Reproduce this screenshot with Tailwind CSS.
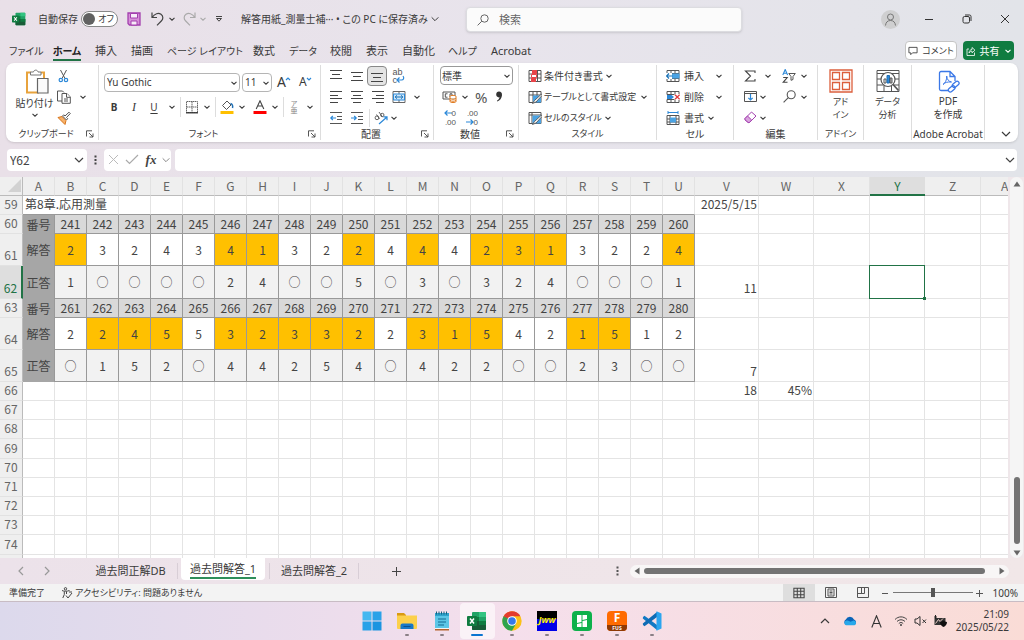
<!DOCTYPE html>
<html lang="ja">
<head>
    <meta charset="UTF-8" />
    <meta name="viewport" content="width=device-width, initial-scale=1" />
    <title>解答用紙_測量士補 - Excel</title>
    <script src="https://cdn.jsdelivr.net/npm/@tailwindcss/browser@4"></script>
</head>
<body class="h-screen flex flex-col overflow-hidden bg-linear-to-r from-[#e9e0e8] via-[#e8e4ec] to-[#e2e4e9] text-[#3a3a3a] text-[10px] leading-3 whitespace-nowrap [font-family:'Noto_Sans','Noto_Sans_CJK_JP',sans-serif] [font-feature-settings:'palt']">
    <svg class="hidden">
        <symbol id="chev" viewBox="0 0 8 8"><path d="M1.500 2.800 4 5.200 6.500 2.800" fill="none" stroke="currentColor" stroke-width="1.100" /></symbol>
        <symbol id="chev-lg" viewBox="0 0 12 12"><path d="M2 4 6 8 10 4" fill="none" stroke="currentColor" stroke-width="1.200" /></symbol>
        <symbol id="launch" viewBox="0 0 8 8"><path d="M.5 6.500V.8H6M3 3l4 4M7 3.500V7H3.500" fill="none" stroke="#444" stroke-width=".9" /></symbol>
        <symbol id="excel" viewBox="0 0 20 20"><path d="M6 1h12a1 1 0 0 1 1 1v16a1 1 0 0 1-1 1H6a1 1 0 0 1-1-1V2a1 1 0 0 1 1-1z" fill="#21a366" /><path d="M12 1h6a1 1 0 0 1 1 1v4h-7z" fill="#33c481" /><path d="M5 6h7v4H5z" fill="#107c41" /><path d="M5 10h14v8a1 1 0 0 1-1 1H6a1 1 0 0 1-1-1z" fill="#185c37" /><path d="M12 10h7v4h-7z" fill="#107c41" /><rect y="5" width="10" height="10" rx="1" fill="#107c41" /><path d="m3 7.500 4 5M7 7.500l-4 5" stroke="#fff" stroke-width="1.500" /></symbol>
        <symbol id="grid" viewBox="0 0 14 14"><path d="M1 1.500h12v11H1zM1 5h12M1 9h12M5 1.500v11M9 1.500v11" fill="none" stroke="#444" stroke-width="1.200" /></symbol>
    </svg>

    <!-- title bar -->
    <header class="h-[38px] shrink-0 flex items-center pl-3">
        <svg class="size-[14px]"><use href="#excel" /></svg>
        <label for="autosave" class="ml-3 w-[43px]">自動保存</label>
        <span class="relative flex">
            <input id="autosave" type="checkbox" class="appearance-none w-[37px] h-4 rounded-full border border-[#888] bg-white" />
            <span class="absolute left-0.5 top-0.5 size-3 rounded-full bg-[#616161] pointer-events-none"></span>
            <span class="absolute right-1 top-0.5 text-[9px] pointer-events-none">オフ</span>
        </span>
        <button aria-label="上書き保存" class="ml-2"><svg class="size-4" viewBox="0 0 16 16"><path d="M2 2h12v12H3.500L2 12.500z" fill="#d68fd8" stroke="#a33fae" stroke-width="1.300" /><path d="M4.500 2.500h7v4.500h-7zM5 10h6v4H5z" fill="#f7ecf8" stroke="#a33fae" /></svg></button>
        <button aria-label="元に戻す" class="ml-2"><svg class="size-4" viewBox="0 0 16 16" fill="none" stroke="#444" stroke-width="1.200"><path d="M2 1.500v5h5M2.300 6.300C4.500 2.500 8.500 1.500 11 3.300c2.500 2 2.300 4.700.3 6.700L7 14.300" /></svg></button>
        <button aria-label="元に戻す一覧" class="ml-0.5"><svg class="size-2"><use href="#chev" /></svg></button>
        <button aria-label="やり直し" class="ml-[5px]"><svg class="size-4" viewBox="0 0 16 16" fill="none" stroke="#aaa" stroke-width="1.200"><path d="M14 1.500v5H9M13.700 6.300C11.500 2.500 7.500 1.500 5 3.300c-2.500 2-2.300 4.700-.3 6.700L9 14.300" /></svg></button>
        <button aria-label="やり直し一覧" class="ml-0.5 text-[#aaa]"><svg class="size-2"><use href="#chev" /></svg></button>
        <button aria-label="クイック アクセス" class="ml-2"><svg class="size-2" viewBox="0 0 8 8" fill="none" stroke="#444"><path d="M1 1.500h6M1.500 3.500h5L4 6.200z" /></svg></button>
        <h1 class="ml-[18px]">解答用紙_測量士補··· • この PC に保存済み</h1>
        <svg class="size-2.5 ml-0.5"><use href="#chev-lg" /></svg>
        <label class="absolute left-[466px] top-[7px] w-[27%] h-[25px] flex items-center gap-2.5 pl-2.5 rounded-sm border border-[#dcdce0] bg-[#fbfbfb] shadow-sm text-[#666]">
            <svg class="size-3 shrink-0" viewBox="0 0 12 12" fill="none" stroke="#666"><circle cx="7.500" cy="4.500" r="3.700" /><path d="M4.800 7.200.6 11.400" /></svg>
            <input type="search" aria-label="検索" placeholder="検索" class="w-full text-[11px] outline-none placeholder:text-[#666]" />
        </label>
        <div class="ml-auto flex items-center">
            <button aria-label="アカウント" class="size-[19px] rounded-full bg-[#cfcfd0] flex items-center justify-center"><svg class="size-[13px]" viewBox="0 0 13 13" fill="none" stroke="#777"><circle cx="6.500" cy="4" r="3" /><path d="M1.500 12.500c.3-3.200 2-5 5-5s4.700 1.800 5 5" /></svg></button>
            <button aria-label="最小化" class="ml-2.5 w-[38px] flex justify-center"><svg class="size-[10px]" viewBox="0 0 10 10"><path d="M1 5.500h8" stroke="#333" /></svg></button>
            <button aria-label="元のサイズ" class="w-[38px] flex justify-center"><svg class="size-[10px]" viewBox="0 0 10 10" fill="none" stroke="#333"><rect x="1" y="2.500" width="6.500" height="6.500" rx="1.500" /><path d="M3 1h4.500A1.500 1.500 0 0 1 9 2.500V7" /></svg></button>
            <button aria-label="閉じる" class="w-[38px] flex justify-center"><svg class="size-[10px]" viewBox="0 0 10 10"><path d="m1 1 8 8M9 1 1 9" stroke="#333" /></svg></button>
        </div>
    </header>

    <!-- ribbon tabs -->
    <nav class="h-[25px] shrink-0 flex items-center pl-[9px] pr-2.5 text-[11px]">
        <a href="#" class="w-11 text-[10px]">ファイル</a>
        <a href="#" class="w-[28px] mr-[14px] font-bold text-[10px] text-[#222] border-b-2 border-[#217346] pt-1 pb-0.5 flex justify-center">ホーム</a>
        <a href="#" class="w-9">挿入</a>
        <a href="#" class="w-9">描画</a>
        <a href="#" class="w-[86px] text-[10px]">ページ レイアウト</a>
        <a href="#" class="w-9">数式</a>
        <a href="#" class="w-[41px] text-[10px]">データ</a>
        <a href="#" class="w-9">校閲</a>
        <a href="#" class="w-9">表示</a>
        <a href="#" class="w-[46px]">自動化</a>
        <a href="#" class="w-[43px] text-[10px]">ヘルプ</a>
        <a href="#">Acrobat</a>
        <button class="ml-auto h-[19px] w-[52px] flex items-center justify-center gap-1 rounded-sm border border-[#c4c4c4] bg-white text-[9px]"><svg class="size-[10px] shrink-0" viewBox="0 0 11 11" fill="none" stroke="#444"><path d="M1 1.500h9v6H5L3 9.500v-2H1z" /></svg>コメント</button>
        <button class="ml-1.5 h-[19px] w-[51px] flex items-center justify-center gap-1 rounded-sm bg-[#107c41] text-white text-[10px]"><svg class="size-[10px]" viewBox="0 0 10 10" fill="none" stroke="#fff" stroke-width=".8"><path d="M3 3H1v6.500h7.500V6.500M3 7C3.300 4.700 4.500 3.500 6 3.500V1.500l3 2.700-3 2.600V5.200C4.800 5.200 3.800 5.700 3 7z" /></svg>共有<svg class="size-2"><use href="#chev" /></svg></button>
    </nav>

    <!-- ribbon -->
    <section class="mx-1.5 h-[79px] shrink-0 flex py-0.5 rounded-lg bg-white shadow">
        <div class="w-[93px] flex flex-col border-r border-[#ddd]">
            <div class="h-[63px] flex">
                <button class="w-[51px] pt-1 pl-1.5 flex flex-col items-center">
                    <svg class="w-6 h-[26px] ml-1" viewBox="0 0 24 26" fill="none"><path d="M6 3.500H2v20h12M16 3.500h3V9" stroke="#e8a33d" stroke-width="2" /><path d="M5.500 6V3h3c.3-2.500 4.200-2.500 4.500 0h3v3z" fill="#fff" stroke="#777" /><path d="M12.500 9.500h10.500v14.500H12.500z" fill="#fafafa" stroke="#666" stroke-width="1.200" /></svg>
                    <span class="mt-0.5">貼り付け</span>
                    <svg class="size-2 mt-0.5"><use href="#chev" /></svg>
                </button>
                <div class="flex flex-col">
                    <button aria-label="切り取り" class="h-[21px]"><svg class="size-[14px]" viewBox="0 0 14 14" fill="none"><path d="m3.500 1 4.500 8.500M9.500 1 5 9.500" stroke="#555" /><circle cx="3.800" cy="11" r="1.700" stroke="#2b88d8" stroke-width="1.200" /><circle cx="9" cy="11" r="1.700" stroke="#2b88d8" stroke-width="1.200" /></svg></button>
                    <button aria-label="コピー" class="h-[21px] flex items-center gap-2"><svg class="size-[14px]" viewBox="0 0 14 14" fill="#fff" stroke="#555"><path d="M5 11H.5V1h5l1.500 1.500" /><path d="M5 3.500h5L13.300 7v6.300H5z" /><path d="M9.500 3.500v3.800h3.800M7 9h4M7 11h4" /></svg><svg class="size-2"><use href="#chev" /></svg></button>
                    <button aria-label="書式のコピー" class="h-[21px]"><svg class="size-[14px]" viewBox="0 0 14 14"><path d="m1 6.500 7 7 1-4-4-4z" fill="#f6b26b" stroke="#d8741a" /><path d="m5.500 5 4 4 1.200-1.300L9.500 6.500l3.800-4-1.300-1.300-4 3.800-1.300-1.200z" fill="#fff" stroke="#555" /></svg></button>
                </div>
            </div>
            <div class="h-3 flex items-center"><span class="flex-1 text-center text-[9px]">クリップボード</span><button aria-label="クリップボードの設定" class="w-3"><svg class="size-2"><use href="#launch" /></svg></button></div>
        </div>

        <div class="w-[222px] flex flex-col border-r border-[#ddd]">
            <div class="h-[63px] pl-[5px] pt-1.5">
                <div class="flex items-center h-[22px]">
                    <span class="relative"><select aria-label="フォント" class="appearance-none block w-[136px] h-[19px] rounded-sm border border-[#b5b5b5] px-0.5 bg-white"><option>Yu Gothic</option></select><svg class="absolute right-0.5 top-1.5 size-2 pointer-events-none"><use href="#chev" /></svg></span>
                    <span class="relative ml-0.5"><select aria-label="フォント サイズ" class="appearance-none block w-[30px] h-[19px] rounded-sm border border-[#b5b5b5] px-0.5 bg-white"><option>11</option></select><svg class="absolute right-0.5 top-1.5 size-2 pointer-events-none"><use href="#chev" /></svg></span>
                    <button aria-label="フォント サイズの拡大" class="ml-[5px] flex text-[14px]">A<svg class="size-1.5 -ml-px" viewBox="0 0 6 6"><path d="m1 4 2-2 2 2" fill="none" stroke="#2b88d8" stroke-width="1.200" /></svg></button>
                    <button aria-label="フォント サイズの縮小" class="ml-2 flex text-[12px]">A<svg class="size-1.5 -ml-px" viewBox="0 0 6 6"><path d="m1 2 2 2 2-2" fill="none" stroke="#2b88d8" stroke-width="1.200" /></svg></button>
                </div>
                <div class="flex items-center h-7">
                    <button aria-label="太字" class="w-5 font-bold">B</button>
                    <button aria-label="斜体" class="w-5 italic [font-family:'Liberation_Serif',serif] text-[12px]">I</button>
                    <button aria-label="下線" class="w-5 underline underline-offset-2">U</button>
                    <svg class="size-2 ml-1"><use href="#chev" /></svg>
                    <span class="mx-1 h-5 border-l border-[#ddd]"></span>
                    <button aria-label="罫線"><svg class="size-[14px]" viewBox="0 0 14 14" fill="none" stroke="#666"><path d="M1.500 1.500h11v11h-11zM7 1.500v11M1.500 7h11" stroke-dasharray="1.500 .5" /><path d="M1 12.800h12" stroke="#333" stroke-width="1.300" /></svg></button>
                    <svg class="size-2 ml-1"><use href="#chev" /></svg>
                    <span class="mx-1 h-5 border-l border-[#ddd]"></span>
                    <button aria-label="塗りつぶしの色"><svg class="size-[14px]" viewBox="0 0 14 14"><path d="M2.500 5.500 7 1l4 4-4.500 4.500z" fill="#fff" stroke="#555" /><path d="M10.500 3.500c2 .5 2.500 2.500 2 4.500" stroke="#1f6fb5" stroke-width="1.500" fill="none" /><path d="M.5 11h13v3H.5z" fill="#ffc000" /></svg></button>
                    <svg class="size-2 ml-1"><use href="#chev" /></svg>
                    <button aria-label="フォントの色" class="ml-[7px]"><svg class="size-[14px]" viewBox="0 0 14 14"><path d="M3.200 9 7 .8 10.800 9M4.600 6h4.800" fill="none" stroke="#444" stroke-width="1.100" /><path d="M.5 11h13v3H.5z" fill="#f00" /></svg></button>
                    <svg class="size-2 ml-1"><use href="#chev" /></svg>
                    <span class="mx-1 h-5 border-l border-[#ddd]"></span>
                    <button aria-label="ふりがなの表示" class="w-3 text-[7px] leading-[7px] text-[#888]">ア<br />亜</button>
                    <svg class="size-2 ml-1.5"><use href="#chev" /></svg>
                </div>
            </div>
            <div class="h-3 flex items-center"><span class="flex-1 text-center text-[9px]">フォント</span><button aria-label="フォントの設定" class="w-3"><svg class="size-2"><use href="#launch" /></svg></button></div>
        </div>

        <div class="w-[113px] flex flex-col border-r border-[#ddd]">
            <div class="pl-1 flex flex-col">
                <div class="h-[21px] flex items-center">
                    <button aria-label="上揃え" class="w-[21px] flex justify-center"><svg class="size-3" viewBox="0 0 12 12" stroke="#444"><path d="M0 .5h12M2 4.500h8M0 8.500h12" /></svg></button>
                    <button aria-label="上下中央揃え" class="w-[21px] flex justify-center"><svg class="size-3" viewBox="0 0 12 12" stroke="#444"><path d="M0 2.500h12M2 6.500h8M0 10.500h12" /></svg></button>
                    <button aria-label="下揃え" class="w-[20px] h-5 flex justify-center items-center rounded-sm border border-[#888] bg-[#e4e4e4]"><svg class="size-3" viewBox="0 0 12 12" stroke="#444"><path d="M0 3.500h12M2 7.500h8M0 11.500h12" /></svg></button>
                    <button aria-label="折り返して全体を表示する" class="w-[23px] flex justify-center"><span class="relative w-3 h-4 text-left text-[9px] leading-2 text-[#555] [font-family:'Liberation_Sans',sans-serif]">ab<br />c<svg class="absolute right-0 bottom-0 size-[9px]" viewBox="0 0 9 9" fill="none" stroke="#2b88d8" stroke-width="1.200"><path d="M7 1c1.500 2 .5 4-1.500 4H1M3.500 2.500 1 5l2.500 2.500" /></svg></span></button>
                </div>
                <div class="h-[21px] flex items-center">
                    <button aria-label="左揃え" class="w-[21px] flex justify-center"><svg class="size-3" viewBox="0 0 12 12" stroke="#444"><path d="M0 .5h12M0 4.500h8M0 7.500h12M0 11.500h8" /></svg></button>
                    <button aria-label="中央揃え" class="w-[21px] flex justify-center"><svg class="size-3" viewBox="0 0 12 12" stroke="#444"><path d="M0 .5h12M2 4.500h8M0 7.500h12M2 11.500h8" /></svg></button>
                    <button aria-label="右揃え" class="w-[21px] flex justify-center"><svg class="size-3" viewBox="0 0 12 12" stroke="#444"><path d="M0 .5h12M4 4.500h8M0 7.500h12M4 11.500h8" /></svg></button>
                    <button aria-label="セルを結合して中央揃え" class="w-[21px] flex justify-center"><svg class="size-[14px]" viewBox="0 0 14 14" fill="none"><path d="M1 1.500h12v11H1zM7 1.500v2.500M7 10v2.500" stroke="#666" /><path d="M1.500 4h11v6h-11z" fill="#cfe6f8" stroke="#2b88d8" /><path d="M3 7h8M5 5.300 3.200 7 5 8.700M9 5.300 10.800 7 9 8.700" stroke="#1872b8" /></svg></button>
                    <svg class="size-2 ml-1"><use href="#chev" /></svg>
                </div>
                <div class="h-[21px] flex items-center">
                    <button aria-label="インデントを減らす" class="w-[21px] flex justify-center"><svg class="size-3" viewBox="0 0 12 12" fill="none"><path d="M0 .5h12M7 4.500h5M7 7.500h5M0 11.500h12" stroke="#555" /><path d="M6 6H.8M2.800 4l-2 2 2 2" stroke="#2b88d8" stroke-width="1.200" /></svg></button>
                    <button aria-label="インデントを増やす" class="w-[21px] flex justify-center"><svg class="size-3" viewBox="0 0 12 12" fill="none"><path d="M0 .5h12M7 4.500h5M7 7.500h5M0 11.500h12" stroke="#555" /><path d="M0 6h5.200M3.200 4l2 2-2 2" stroke="#2b88d8" stroke-width="1.200" /></svg></button>
                    <span class="ml-0.5 mr-1 h-[18px] border-l border-[#ddd]"></span>
                    <button aria-label="方向"><svg class="size-[14px]" viewBox="0 0 14 14" fill="none"><circle cx="3" cy="6.800" r="1.900" stroke="#555" stroke-width=".9" /><path d="M2.500 3.500 5.500 8M5 1l3.500 5" stroke="#555" stroke-width=".9" /><circle cx="8.300" cy="4" r="1.700" stroke="#555" stroke-width=".9" /><path d="M5 13 13 6M9.500 5.800H13v3.500" stroke="#2b88d8" stroke-width="1.200" /></svg></button>
                    <svg class="size-2 ml-0.5"><use href="#chev" /></svg>
                </div>
            </div>
            <div class="h-3 flex items-center"><span class="flex-1 text-center">配置</span><button aria-label="配置の設定" class="w-3"><svg class="size-2"><use href="#launch" /></svg></button></div>
        </div>

        <div class="w-[85px] flex flex-col border-r border-[#ddd]">
            <div class="pl-1.5 flex flex-col">
                <div class="h-[21px] flex items-center"><span class="relative"><select aria-label="表示形式" class="appearance-none block w-[73px] h-[19px] rounded-sm border border-[#999] px-px bg-white"><option>標準</option></select><svg class="absolute right-0.5 top-1.5 size-2 pointer-events-none"><use href="#chev" /></svg></span></div>
                <div class="h-[21px] flex items-center">
                    <button aria-label="通貨表示形式" class="ml-0.5"><svg class="w-[15px] h-3" viewBox="0 0 15 12" fill="none"><path d="M1 1h12v7H1z" stroke="#555" /><path d="M5.500 2.800H3.300v3.400h2.200M8 6.200V2.800h2v3.400" stroke="#555" /><path d="M8 5.500c0-1.500 6-1.500 6 0v5c0 1.400-6 1.400-6 0zM8 7.500c1.500 1 4.500 1 6 0M8 9.500c1.500 1 4.500 1 6 0" fill="#fff" stroke="#e07a1f" /></svg></button>
                    <svg class="size-2 ml-1"><use href="#chev" /></svg>
                    <button aria-label="パーセント スタイル" class="ml-1.5 text-[15px] text-[#555]">%</button>
                    <button aria-label="桁区切りスタイル" class="ml-2"><svg class="w-2 h-[11px]" viewBox="0 0 8 11"><path d="M4 .5c2 0 3.200 1.300 3 3.700C6.700 7.200 5 9.500 2.300 10.500l-.4-.7C3.400 9 4.300 7.800 4.500 6.300 2.800 6.700 1.200 5.600 1.200 3.600 1.200 1.800 2.300.5 4 .5z" fill="#333" /></svg></button>
                </div>
                <div class="h-[21px] flex items-center gap-2 text-[8px] leading-[9px] text-[#555] [font-family:'Liberation_Sans',sans-serif]">
                    <button aria-label="小数点以下の表示桁数を増やす" class="ml-0.5 w-[14px] text-right"><span class="flex items-center justify-end"><svg class="size-2" viewBox="0 0 8 8" fill="none" stroke="#2b88d8" stroke-width="1.200"><path d="M8 4H1M3.500 1.500 1 4l2.500 2.500" /></svg>0</span>.00</button>
                    <button aria-label="小数点以下の表示桁数を減らす" class="w-[14px] text-right">.00<span class="flex items-center justify-end"><svg class="size-2" viewBox="0 0 8 8" fill="none" stroke="#2b88d8" stroke-width="1.200"><path d="M0 4h7M4.500 1.500 7 4 4.500 6.500" /></svg>0</span></button>
                </div>
            </div>
            <div class="h-3 flex items-center"><span class="flex-1 text-center">数値</span><button aria-label="数値の設定" class="w-3"><svg class="size-2"><use href="#launch" /></svg></button></div>
        </div>

        <div class="w-[138px] flex flex-col border-r border-[#ddd]">
            <button class="h-[21px] pl-[9px] flex items-center gap-0.5"><svg class="size-[14px]" viewBox="0 0 14 14" fill="none"><path d="M1 1.500h12v11H1zM1 5h12M1 9h12M9.500 1.500v11" stroke="#555" /><path d="M4 1h5v4H4zM3 9h5v4H3z" fill="#e8454a" /><path d="M3.500 5.500h5v3h-5z" fill="#fff" stroke="#e8454a" /></svg>条件付き書式<svg class="size-2"><use href="#chev" /></svg></button>
            <button class="h-[21px] pl-[9px] flex items-center gap-0.5 text-[9px]"><svg class="size-[14px]" viewBox="0 0 14 14" fill="none"><path d="M1 1.500h12v11H1zM1 5h12M5 1.500v11M9 1.500v11" stroke="#555" /><path d="M5 5.500h8v7H5z" fill="#4ba3e3" /><path d="m13.500 4-7 6.500-2 3 3.500-1.500 6-6.500z" fill="#fff" stroke="#555" stroke-width=".9" /></svg>テーブルとして書式設定<svg class="size-2 ml-0.5"><use href="#chev" /></svg></button>
            <button class="h-[21px] pl-[9px] flex items-center gap-0.5 text-[9px]"><svg class="size-[14px]" viewBox="0 0 14 14" fill="none"><path d="M1 1.500h12v11H1zM1 4h12M4 1.500v11" stroke="#555" /><path d="M4.500 4.500H13v8H4.500z" fill="#4ba3e3" /><path d="m13.500 4-7 6.500-2 3 3.500-1.500 6-6.500z" fill="#fff" stroke="#555" stroke-width=".9" /></svg>セルのスタイル<svg class="size-2"><use href="#chev" /></svg></button>
            <div class="h-3 text-center text-[9px]">スタイル</div>
        </div>

        <div class="w-[77px] flex flex-col border-r border-[#ddd]">
            <button class="h-[21px] pl-[9px] pr-2.5 flex items-center gap-1"><svg class="size-[14px]" viewBox="0 0 14 14" fill="none"><path d="M1 1.500h12v11H1zM1 4.500h12M1 9.500h12M5 1.500v3M9 1.500v3M5 9.500v3M9 9.500v3" stroke="#555" /><path d="M6 4.500h7.500v5H6z" fill="#4ba3e3" /><path d="M0 4h6v6H0z" fill="#fff" /><path d="M6.500 7H.5M3 4.500.5 7 3 9.500" stroke="#1872b8" stroke-width="1.200" /></svg>挿入<svg class="size-2 ml-auto"><use href="#chev" /></svg></button>
            <button class="h-[21px] pl-[9px] pr-2.5 flex items-center gap-1"><svg class="size-[14px]" viewBox="0 0 14 14" fill="none"><path d="M1 4.500v-3h12v3M1 9.500v3h12v-3M5 1.500v3M9 1.500v3M5 9.500v3M9 9.500v3M1 4.500h12M1 9.500h12" stroke="#555" /><path d="M1 5h4.500L8 7 5.500 9H1z" fill="#2b88d8" /><path d="M8.500 4H14v6H8.500z" fill="#fff" /><path d="m9 4.700 4.600 4.600M13.600 4.700 9 9.300" stroke="#e03a3e" stroke-width="1.300" /></svg>削除<svg class="size-2 ml-auto"><use href="#chev" /></svg></button>
            <button class="h-[21px] pl-[9px] flex items-center gap-1"><svg class="size-[14px]" viewBox="0 0 14 14" fill="none"><path d="M1 4.500h12v9H1zM1 8h12M1 11h12M4 4.500v9M10 4.500v9" stroke="#555" /><path d="M4 6.500h6v5H4z" fill="#4ba3e3" /><path d="M2 1.500h10M2 0v3M12 0v3" stroke="#2b88d8" /></svg>書式<svg class="size-2 -ml-px"><use href="#chev" /></svg></button>
            <div class="h-3 text-center">セル</div>
        </div>

        <div class="w-[84px] flex flex-col border-r border-[#ddd]">
            <div class="h-[21px] pl-2.5 flex items-center">
                <button aria-label="合計"><svg class="size-3" viewBox="0 0 12 12" fill="none" stroke="#444" stroke-width="1.100"><path d="M11 3V1H1.500L6.500 6l-5 5H11V9" /></svg></button><svg class="size-2 ml-2"><use href="#chev" /></svg>
                <button aria-label="並べ替えとフィルター" class="ml-2.5"><svg class="size-[14px]" viewBox="0 0 14 14" fill="none"><path d="M.8 6 3.200.5 5.600 6M1.500 4.200h3.400" stroke="#2b88d8" stroke-width="1.100" /><path d="M1.200 8.500h4l-4 4.800h4.300" stroke="#444" stroke-width="1.100" /><path d="M6.800 4.500h6.500L11 7.500v3l-2 .8V7.500z" stroke="#555" /></svg></button><svg class="size-2 ml-1"><use href="#chev" /></svg>
            </div>
            <div class="h-[21px] pl-2.5 flex items-center">
                <button aria-label="フィル"><svg class="size-[13px]" viewBox="0 0 13 13" fill="none"><path d="M.5 1.500h12v10H.5zM.5 3.500h12" stroke="#555" /><path d="M6.500 4v6M4.300 7.800l2.200 2.200 2.200-2.200" stroke="#2b88d8" stroke-width="1.200" /></svg></button><svg class="size-2 ml-0.5"><use href="#chev" /></svg>
                <button aria-label="検索と選択" class="ml-4"><svg class="size-[13px]" viewBox="0 0 13 13" fill="none" stroke="#555" stroke-width="1.100"><circle cx="8.200" cy="4.800" r="4" /><path d="M5.300 7.700.6 12.400" /></svg></button><svg class="size-2 ml-1"><use href="#chev" /></svg>
            </div>
            <div class="h-[21px] pl-2.5 flex items-center">
                <button aria-label="クリア"><svg class="size-[13px]" viewBox="0 0 13 13"><path d="M1 7.500 7.500 1 12 5 5.500 11.500H4.200L1 8.800z" fill="#fff" stroke="#a33fae" /><path d="m1 7.500 2.500-2.500 4.200 4-2.300 2.500H4.200L1 8.800z" fill="#d9a3de" stroke="#a33fae" /></svg></button><svg class="size-2 ml-0.5"><use href="#chev" /></svg>
            </div>
            <div class="h-3 text-center">編集</div>
        </div>

        <div class="w-[46px] flex flex-col border-r border-[#ddd] text-center text-[9px]">
            <button class="h-[63px] pt-1 flex flex-col items-center leading-[13px]"><svg class="size-6 shrink-0 mb-0.5" viewBox="0 0 24 24" fill="none" stroke="#dc5f3c" stroke-width="1.300"><path d="M1 1h22v22H1z" /><path d="M3.500 3.500h7v7h-7zM13.500 3.500h7v7h-7zM3.500 13.500h7v7h-7zM13.500 13.500h7v7h-7z" /></svg>アド<br />イン</button>
            <div class="h-3">アドイン</div>
        </div>
        <div class="w-12 flex flex-col border-r border-[#ddd] text-center">
            <button class="h-[63px] pt-1 flex flex-col items-center text-[9px] leading-[13px]"><svg class="size-6 shrink-0 mb-0.5" viewBox="0 0 24 24" fill="none" stroke="#555"><path d="M1 1.500h22v21H1zM1 4.500h22M1 10h5M1 16h8M17 16h6M19 10h4M8 17v5.500M15.500 17v5.500" /><circle cx="12" cy="10.500" r="7" fill="#fff" stroke-width="1.200" /><path d="m17 15.500 5.500 6" stroke-width="1.700" /><path d="M8 10h2v4H8z" /><path d="M11 6.500h2.500V14H11z" fill="#2b88d8" stroke="#1f6fb5" /><path d="M14 9h2v5h-2z" fill="#bbb" /></svg>データ<br />分析</button>
        </div>
        <div class="w-[73px] flex flex-col border-r border-[#ddd] text-center">
            <button class="h-[63px] pt-1 flex flex-col items-center leading-[13px]"><svg class="size-6 shrink-0 mb-0.5" viewBox="0 0 24 24" fill="none" stroke="#3b78e7" stroke-width="1.300"><path d="M12 21.500H5A1.500 1.500 0 0 1 3.500 20V4A1.500 1.500 0 0 1 5 2.500h9l5 5V12M14 2.500v5h5" /><path d="M7 15.500c2-1 4-4.500 3.700-8.500.3 3.500 2 5.500 4.800 6M7 15.500c1.500-2 4.500-2.800 8.500-2.500" stroke-width="1" /><rect x="16" y="13.500" width="7.500" height="4" rx="2" transform="rotate(-40 19.500 15.500)" /><rect x="12" y="18" width="7.500" height="4" rx="2" transform="rotate(-40 15.500 20)" /></svg>PDF<br />を作成</button>
            <div class="h-3">Adobe Acrobat</div>
        </div>
        <button aria-label="リボンを折りたたむ" class="ml-auto mr-1.5 self-end"><svg class="size-3"><use href="#chev-lg" /></svg></button>
    </section>

    <!-- formula bar -->
    <section class="h-[35px] shrink-0 flex items-center gap-1.5 px-[7px] text-[#444]">
        <div class="w-20 h-[22px] flex items-center rounded-sm bg-white pl-[3px] pr-0.5">
            <input aria-label="名前ボックス" value="Y62" class="min-w-0 flex-1 outline-none text-[12px] [font-family:'Noto_Sans_CJK_JP',sans-serif]" />
            <svg class="size-3"><use href="#chev-lg" /></svg>
        </div>
        <svg class="w-[5px] h-3" viewBox="0 0 5 12" fill="#444"><path d="M1.500 1.500h2v2h-2zM1.500 5h2v2h-2zM1.500 8.500h2v2h-2z" /></svg>
        <div class="w-[67px] h-[22px] flex items-center gap-1.5 rounded-sm bg-white pl-1">
            <button aria-label="キャンセル"><svg class="size-[11px]" viewBox="0 0 11 11"><path d="m1 1 9 9M10 1 1 10" stroke="#bbb" /></svg></button>
            <button aria-label="入力"><svg class="w-[14px] h-[11px]" viewBox="0 0 14 11" fill="none"><path d="m1 6 3.500 3.500L13 1" stroke="#aaa" stroke-width="1.200" /></svg></button>
            <button aria-label="関数の挿入" class="w-3 font-bold italic text-[13px] [font-family:'Liberation_Serif',serif]">fx</button>
            <svg class="size-2.5 -ml-0.5 shrink-0 text-[#888]"><use href="#chev-lg" /></svg>
        </div>
        <div class="flex-1 -ml-0.5 h-[22px] flex items-center rounded-sm bg-white pr-px">
            <input aria-label="数式バー" class="flex-1 outline-none px-1" />
            <svg class="size-3"><use href="#chev-lg" /></svg>
        </div>
    </section>

    <!-- worksheet -->
    <main class="flex-1 min-h-0 flex bg-[#efe7ea]">
        <div class="flex-1 min-w-0 overflow-hidden bg-white">
            <table class="w-full table-fixed border-separate border-spacing-0 text-center text-[12px] leading-4 text-[#444] [font-family:'Noto_Sans_CJK_JP',sans-serif] [&_td]:p-0 [&_th]:p-0 [&_th]:font-normal">
                <colgroup id="cols"></colgroup>
                <thead><tr id="letters" class="h-[19px] bg-[#efefef] text-[#666]"></tr></thead>
                <tbody id="rows"></tbody>
            </table>
        </div>
        <div class="w-[13px] ml-0.5 mr-px flex flex-col items-center rounded-full bg-[#f5f5f5] pt-1 pb-0.5">
            <svg class="w-2 h-1.5" viewBox="0 0 8 6"><path d="M4 .5 7.500 5.500h-7z" fill="#666" /></svg>
            <div class="mt-auto h-[67px] w-1.5 rounded-full bg-[#737373]"></div>
            <svg class="w-2 h-1.5 mt-1.5" viewBox="0 0 8 6"><path d="M4 5.500.5.5h7z" fill="#666" /></svg>
        </div>
    </main>

    <!-- sheet tabs -->
    <nav class="h-[26px] shrink-0 flex items-center bg-linear-to-r from-[#ece2ea] to-[#f1e7e8] text-[11px]">
        <button aria-label="前のシート" class="ml-[15px]"><svg class="size-3 text-[#999] rotate-90"><use href="#chev-lg" /></svg></button>
        <button aria-label="次のシート" class="ml-3.5"><svg class="size-3 text-[#999] -rotate-90"><use href="#chev-lg" /></svg></button>
        <a href="#" class="ml-[31px] w-[94px] h-4 flex items-center justify-center border-r border-[#d8ced6]">過去問正解DB</a>
        <a href="#" class="ml-[3px] mr-1 w-[84px] self-start h-[22px] rounded-b bg-white flex justify-center items-start"><span class="mt-[5px] h-[16px] border-b-2 border-[#2f8f5b]">過去問解答_1</span></a>
        <a href="#" class="w-[90px] h-4 flex items-center justify-center border-x border-[#d8ced6]">過去問解答_2</a>
        <button aria-label="新しいシート" class="ml-8"><svg class="size-[11px]" viewBox="0 0 11 11"><path d="M5.500 1v9M1 5.500h9" stroke="#444" /></svg></button>
        <svg class="ml-auto mr-2.5 w-[5px] h-3" viewBox="0 0 5 12" fill="#555"><path d="M1.500 1.500h2v2h-2zM1.500 5h2v2h-2zM1.500 8.500h2v2h-2z" /></svg>
        <div class="w-[37%] h-[13px] mr-[15px] flex items-center rounded-full bg-[#f8f6f6] px-1">
            <svg class="w-1.5 h-2" viewBox="0 0 6 8"><path d="M.5 4 5.500.5v7z" fill="#666" /></svg>
            <div class="flex-1 ml-1 mr-3.5 h-1.5 rounded-full bg-[#737373]"></div>
            <svg class="w-1.5 h-2" viewBox="0 0 6 8"><path d="M5.500 4 .5.5v7z" fill="#666" /></svg>
        </div>
    </nav>

    <!-- status bar -->
    <footer class="h-[18px] shrink-0 flex items-center bg-[#f3f3f3] border-b border-[#c8bcc4] pl-[9px] pr-1.5 text-[9px]">
        <span>準備完了</span>
        <button class="ml-4 flex items-center"><svg class="w-3 h-3 mr-0.5" viewBox="0 0 12 12" fill="none" stroke="#444"><circle cx="4.500" cy="1.800" r="1.200" /><path d="M1 3.500c2 1 5 1 7.500 0M3.300 4.500v3L1.800 11M5.500 4.500v2.500M5 8.500l2 2.500 4-5M8 5h3" /></svg>アクセシビリティ: 問題ありません</button>
        <button aria-label="標準" class="ml-auto w-8 h-[17px] bg-[#dedede] flex items-center justify-center"><svg class="size-3"><use href="#grid" /></svg></button>
        <button aria-label="ページ レイアウト" class="w-8 flex justify-center"><svg class="w-3 h-[11px]" viewBox="0 0 12 11" fill="none" stroke="#555"><path d="M.5.5h11v10H.5zM3 2h6v7H3zM4.500 4h3M4.500 5.500h3M4.500 7h3" /></svg></button>
        <button aria-label="改ページ プレビュー" class="w-8 flex justify-center"><svg class="w-3 h-[11px]" viewBox="0 0 12 11" fill="none" stroke="#555"><path d="M.5.5h11v10H.5zM4.500 .5v6M.5 6.500h7v-6" /></svg></button>
        <button aria-label="縮小" class="ml-0.5"><svg class="size-2" viewBox="0 0 8 8"><path d="M1 4.500h6" stroke="#555" /></svg></button>
        <input type="range" aria-label="ズーム" min="0" max="200" value="100" class="ml-1 w-20 h-3 appearance-none bg-transparent [&::-webkit-slider-runnable-track]:h-px [&::-webkit-slider-runnable-track]:bg-[#777] [&::-webkit-slider-thumb]:appearance-none [&::-webkit-slider-thumb]:w-1 [&::-webkit-slider-thumb]:h-[9px] [&::-webkit-slider-thumb]:-mt-1 [&::-webkit-slider-thumb]:bg-[#555]" />
        <button aria-label="拡大" class="ml-0.5"><svg class="size-2" viewBox="0 0 8 8"><path d="M4.500 1v7M1 4.500h7" stroke="#555" /></svg></button>
        <span class="ml-2.5 text-[10px]">100%</span>
    </footer>

    <!-- taskbar -->
    <footer class="h-[38px] shrink-0 grid grid-cols-[1fr_auto_1fr] items-center bg-linear-to-r from-[#dcd9ec] via-[#f5dfec] to-[#fadcd6]">
        <span></span>
        <div class="flex [&>button]:w-[35px] [&>button]:h-9 [&>button]:flex [&>button]:flex-col [&>button]:items-center [&>button]:justify-end [&>button]:gap-[3px] [&>button]:pb-[3px]">
            <button aria-label="スタート"><svg class="size-5" viewBox="0 0 20 20" fill="#1a94e0"><path d="M.5.500h9v9h-9z" fill="#45b8f0" /><path d="M10.500.500h9v9h-9zM.5 10.500h9v9h-9z" fill="#2aa2e8" /><path d="M10.500 10.500h9v9h-9z" /></svg><i class="h-0.5"></i></button>
            <button aria-label="エクスプローラー"><svg class="size-5" viewBox="0 0 20 20"><path d="M0 2h7l2 2v3H0z" fill="#d99a12" /><path d="M0 4.500h20V17a1 1 0 0 1-1 1H1a1 1 0 0 1-1-1z" fill="#fcd04b" /><path d="M3.500 18v-3.500a2 2 0 0 1 2-2h9a2 2 0 0 1 2 2V18z" fill="#1878c8" /><path d="M6.500 15.500h7" stroke="#0d4f8c" /></svg><i class="w-1 h-0.5 rounded-full bg-[#8a7f86]"></i></button>
            <button aria-label="メモ帳"><svg class="size-5" viewBox="0 0 20 20"><path d="M3 2h14v15H3z" fill="#5cc6e6" /><path d="M3 2h14v3H3z" fill="#2ea3cc" /><path d="M4.500.500v3M7 .500v3M9.500.500v3M12 .500v3M14.500.500v3" stroke="#17607e" /><path d="M6 8h8M6 11h8M6 14h6" stroke="#126a92" stroke-width="1.200" /><path d="M3 17.500h14v2H3z" fill="#b4622d" /><path d="M3 17h14v1H3z" fill="#f4f4f4" /></svg><i class="w-1 h-0.5 rounded-full bg-[#8a7f86]"></i></button>
            <button aria-label="Excel" class="rounded bg-white/60"><svg class="size-5"><use href="#excel" /></svg><i class="w-3 h-0.5 rounded-full bg-[#0b75d1]"></i></button>
            <button aria-label="Chrome"><svg class="size-5" viewBox="0 0 20 20"><circle cx="10" cy="10" r="9.700" fill="#fbc116" /><path d="M10 10 1.600 5.150A9.700 9.700 0 0 1 18.400 5.150H10z" fill="#e33b2e" /><path d="M1.600 5.150A9.700 9.700 0 0 0 10 19.700l4.200-7.300-4.200-2.400z" fill="#2da44e" /><path d="M1.600 5.150 5.800 12.400 10 5.150z" fill="#e33b2e" /><path d="M1.600 5.150 5.800 12.400 10 10z" fill="#2da44e" /><circle cx="10" cy="10" r="4.800" fill="#fff" /><circle cx="10" cy="10" r="3.800" fill="#3579ea" /></svg><i class="w-1 h-0.5 rounded-full bg-[#8a7f86]"></i></button>
            <button aria-label="Jw_cad"><span class="size-5 pt-1 bg-linear-to-b from-black from-40% to-[#0000e8] to-40% text-[#fff200] italic font-bold text-[9px] leading-[10px]">Jww</span><i class="w-1 h-0.5 rounded-full bg-[#8a7f86]"></i></button>
            <button aria-label="グリッド"><svg class="size-5" viewBox="0 0 20 20"><rect width="20" height="20" rx="4" fill="#0db14b" /><path d="M5 4h4.500v7L5 12zM10.500 4H15v4l-4.500 1zM5 13l4.500-1v4H5zM10.500 10 15 9v7h-4.500z" fill="#fff" /></svg><i class="w-1 h-0.5 rounded-full bg-[#8a7f86]"></i></button>
            <button aria-label="Fusion"><span class="size-5 rounded-sm bg-[#ff6b00] text-white font-bold text-[12px] leading-[14px] flex flex-col">F<span class="mt-auto h-1.5 text-[5px] leading-[6px] bg-[#8f3a05] rounded-b-sm">FUS</span></span><i class="w-1 h-0.5 rounded-full bg-[#8a7f86]"></i></button>
            <button aria-label="Visual Studio Code"><svg class="size-5" viewBox="0 0 20 20"><path d="m1 6 1.500-1.300L15 14v5L.8 7.500z" fill="#1279c4" /><path d="m1 14 1.500 1.300L15 6V1L.8 12.500z" fill="#0f6cb5" /><path d="M14.500.300 19.500 2.500v15l-5 2.200z" fill="#2ba5ef" /></svg><i class="w-1 h-0.5 rounded-full bg-[#8a7f86]"></i></button>
        </div>
        <div class="flex items-center justify-end pr-[15px]">
            <button aria-label="隠れているインジケーター"><svg class="size-3 rotate-180"><use href="#chev-lg" /></svg></button>
            <svg class="ml-3 w-[14px] h-[10px]" viewBox="0 0 14 10"><path d="M3.500 9A3 3 0 0 1 2.800 3.500 4.500 4.500 0 0 1 11 3.500 3 3 0 0 1 11.500 9z" fill="#0a64b8" /><path d="M3 9.300a2.500 2.500 0 0 1 .5-4.800c1.500-.3 2.500.5 4 1.300l3-1.300A2.500 2.500 0 0 1 11.500 9.300z" fill="#28a8ea" /></svg>
            <svg class="ml-3.5 w-[11px] h-[13px]" viewBox="0 0 11 13"><path d="M.8 12.500 5.500.800l4.700 11.700M2.300 8.500h6.400" fill="none" stroke="#333" stroke-width="1.100" /></svg>
            <svg class="ml-3 w-[14px] h-3" viewBox="0 0 14 12" fill="none" stroke="#444"><path d="M1 4.500c3.500-3.500 8.500-3.500 12 0M3 6.500c2.500-2.300 5.500-2.300 8 0M4.800 8.500c1.500-1.300 2.900-1.300 4.400 0" /><circle cx="7" cy="10" r=".6" fill="#444" /></svg>
            <svg class="ml-1.5 w-[13px] h-3" viewBox="0 0 13 12" fill="none" stroke="#333"><path d="M1 4h2l3-2.500v9L3 8H1zM8.500 4.500l3.500 3.500M12 4.500 8.500 8" /></svg>
            <svg class="ml-1.5 w-[14px] h-3" viewBox="0 0 14 12"><path d="M1.500 3h11v7h-11z" fill="#333" /><path d="m2.500 8.500 3-4 1.500 2 3-3" stroke="#fadcd6" stroke-width=".9" fill="none" /><path d="M2.500 0v4M1 2h3" stroke="#222" /><path d="M7 7c2 0 2-1 3.500-1.500C12 6 12 7 14 7c0 2.500-1.500 4-3.500 5C8.500 11 7 9.500 7 7z" fill="#111" /></svg>
            <div class="w-[62px] text-right leading-[13px]">21:09<br />2025/05/22</div>
        </div>
    </footer>

    <script>
        const letters = [...'ABCDEFGHIJKLMNOPQRSTUVWXYZ', 'AA'];
        // fixed widths for A-U and V-Z, the last column takes the rest
        const widths = [23, ...Array(21).fill(32), 64, 55, 56, 55, 56];
        document.getElementById('cols').innerHTML =
            widths.map(w => `<col style="width:${w}px">`).join('') + '<col>';

        document.getElementById('letters').innerHTML =
            '<th class="border-r border-b border-[#bbb]"><svg class="w-[14px] h-[14px] ml-auto" viewBox="0 0 14 14"><path d="M13 0v13H0z" fill="#d2d2d2"/></svg></th>' +
            letters.map(l => {
                if (l === 'Y') return '<th class="bg-[#dedede] text-[#217346] border-b-2 border-[#217346]">Y</th>';
                if (l === 'AA') return '<th class="border-b border-[#bbb]"><div class="overflow-hidden pl-5 text-left">AA</div></th>';
                return `<th class="border-r border-r-[#e2e2e2] border-b border-b-[#bbb]">${l}</th>`;
            }).join('');

        const range = (from) => Array.from({ length: 20 }, (_, i) => from + i);
        const sheet = {
            59: { v: '2025/5/15' },
            60: { kind: 'head', label: '番号', cells: range(241) },
            61: { kind: 'answer', label: '解答', cells: [...'23243413224442313224'], hit: [0, 5, 6, 9, 11, 13, 14, 15, 19] },
            62: { kind: 'key', label: '正答', cells: [...'1○○○○24○○5○3○324○○○1'], v: '11' },
            63: { kind: 'head', label: '番号', cells: range(261) },
            64: { kind: 'answer', label: '解答', cells: [...'22455323322315421512'], hit: [1, 2, 3, 5, 6, 7, 8, 9, 11, 12, 13, 16, 17] },
            65: { kind: 'key', label: '正答', cells: [...'○152○44254○422○○23○○'], v: '7' },
            66: { v: '18', w: '45%' },
        };

        const plain = 'border-r border-b border-[#e4e4e4]';
        const fills = {
            head: 'border-r border-b border-[#999] bg-[#d9d9d9]',
            answer: 'border-r border-b border-[#999]',
            key: 'border-r border-b border-[#999] bg-[#f2f2f2]',
        };
        const heightOf = (n, kind) => {
            if (n === 62) return 'h-[33px]';
            if (kind === 'answer' || kind === 'key') return 'h-8';
            return n === 69 || n === 74 ? 'h-5' : 'h-[19px]';
        };

        let html = '';
        for (let n = 59; n <= 75; n++) {
            const row = sheet[n] || {};
            const num = n === 62 ? 'bg-[#dedede] text-[#217346] border-r-2 border-r-[#217346]' : 'bg-[#efefef] text-[#666] border-r border-r-[#bbb]';
            html += `<tr class="${heightOf(n, row.kind)}"><th class="align-bottom border-b border-b-[#e2e2e2] ${num}"><div class="pb-0.5">${n === 75 ? '' : n}</div></th>`;
            if (row.kind) {
                html += `<td class="border-r border-[#999] bg-[#a6a6a6]">${row.label}</td>`;
                row.cells.forEach((c, i) => {
                    const hit = row.hit && row.hit.includes(i) ? 'bg-[#ffc000]' : '';
                    html += `<td class="${fills[row.kind]} ${hit}">${c}</td>`;
                });
            } else if (n === 59) {
                html += '<td colspan="3" class="border-r border-r-[#e4e4e4] border-b border-b-[#999] text-left align-bottom"><div class="pl-0.5 pb-0.5">第8章.応用測量</div></td>';
                html += '<td class="border-r border-r-[#e4e4e4] border-b border-b-[#999]"></td>'.repeat(18);
            } else {
                html += `<td class="${plain}"></td>`.repeat(21);
            }
            html += `<td class="${plain} align-bottom text-right"><div class="pr-px pb-0.5">${row.v || ''}</div></td>`;
            html += `<td class="${plain} align-bottom text-right"><div class="pr-px pb-0.5">${row.w || ''}</div></td>`;
            html += `<td class="${plain}"></td>`;
            html += n === 62
                ? '<td class="relative border-r border-b border-[#217346]"><div class="absolute -inset-px border border-[#217346]"></div><div class="absolute -right-0.5 -bottom-0.5 size-[3px] bg-[#217346]"></div></td>'
                : `<td class="${plain}"></td>`;
            html += `<td class="${plain}"></td><td class="border-b border-[#e4e4e4]"></td></tr>`;
        }
        document.getElementById('rows').innerHTML = html;
    </script>
</body>
</html>
